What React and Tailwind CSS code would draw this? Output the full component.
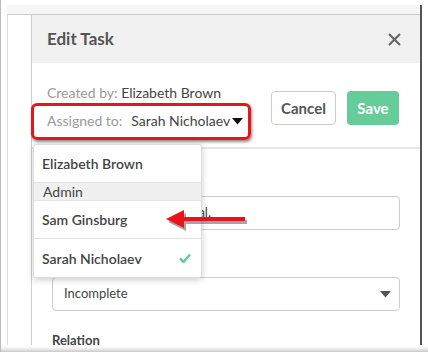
import React from "react";

const font = { fontFamily: "Lato, 'Open Sans', sans-serif" };

const Caret = ({ className = "" }) => (
  <svg width="11" height="7" viewBox="0 0 11 7" className={className}>
    <path d="M0 0 L11 0 L5.5 6.5 Z" fill="currentColor" />
  </svg>
);

const App = () => {
  return (
    <div
      className="relative w-[428px] h-[352px] overflow-hidden bg-white border-l border-[#bbb] shadow-[inset_0_-6px_4px_-4px_rgba(0,0,0,0.25)]"
      style={font}
    >
      {/* page frame */}
      <div className="ml-[6px] mt-[5px] w-[415px] h-[340px] flex flex-col overflow-hidden border-r-2 border-[#555]">
        <div className="h-[10px] shrink-0 bg-[#f6f6f6] border-b border-[#ccc]" />
        <div className="flex flex-1 min-h-0">
          <div className="w-[24px] shrink-0 border-l border-[#ddd]" />

          {/* Edit Task panel */}
          <div className="flex-1 flex flex-col border-l border-[#ccc] bg-white">
            <div className="h-[48px] shrink-0 bg-[#f1f1f1] flex items-center justify-between pl-[15px] pr-[19px]">
              <h1 className="text-[17px] font-bold text-[#555]">Edit Task</h1>
              <svg width="13" height="13" viewBox="0 0 13 13">
                <path d="M1 1 L12 12 M12 1 L1 12" stroke="#666" strokeWidth="2.2" />
              </svg>
            </div>

            <div className="shrink-0 flex items-start justify-between pl-[15px] pr-[21px] pt-[19px] h-[86px] border-b-2 border-[#e6e6e6]">
              <div className="text-[14px] leading-[16px]">
                <div className="pt-[3px]">
                  <span className="text-[#999]">Created by: </span>
                  <span className="text-[#444]">Elizabeth Brown</span>
                </div>
                <div className="mt-[12px] flex items-center">
                  <span className="text-[#999]">Assigned to:</span>
                  <span className="ml-[9px] text-[#444]">Sarah Nicholaev</span>
                  <Caret className="ml-[2px] text-[#111]" />
                </div>
              </div>
              <div className="flex gap-[11px] mt-[9px]">
                <button className="h-[34px] w-[65px] rounded-[4px] border border-[#ccc] bg-white text-[15px] font-bold text-[#555]">
                  Cancel
                </button>
                <button className="h-[34px] w-[52px] rounded-[4px] bg-[#66cc9a] text-[15px] font-bold text-white">
                  Save
                </button>
              </div>
            </div>

            <div className="px-[20px] pt-[21px]">
              <div className="h-[26px]" />
              <div className="h-[34px] rounded-[4px] border border-[#ccc] flex items-center pl-[12px] text-[13px] text-[#444]">
                Review the final proposal.
              </div>
              <div className="h-[47px]" />
              <div className="h-[34px] rounded-[4px] border border-[#ccc] flex items-center justify-between pl-[11px] pr-[8px] text-[13px] text-[#444]">
                <span>Incomplete</span>
                <Caret className="text-[#555]" />
              </div>
              <div className="mt-[20px] text-[13px] font-bold text-[#444]">Relation</div>
            </div>
          </div>
        </div>
      </div>

      {/* red highlight around Assigned to */}
      <div className="absolute left-[30px] top-[103px] w-[220px] h-[37px] rounded-[6px] border-[3px] border-[#e8131b] shadow-[1px_2px_3px_rgba(0,0,0,0.45)]" />

      {/* assignee dropdown */}
      <div className="absolute left-[32px] top-[144px] w-[169px] bg-white rounded-[3px] border border-[#ddd] shadow-[0_2px_6px_rgba(0,0,0,0.2)] text-[14px] font-semibold text-[#444]">
        <div className="h-[38px] flex items-center pl-[8px] border-b border-[#e3e3e3]">Elizabeth Brown</div>
        <div className="h-[18px] flex items-center pl-[9px] bg-[#f0f0f0] border-b border-[#e3e3e3] font-normal">Admin</div>
        <div className="h-[38px] flex items-center pl-[8px] border-b border-[#e3e3e3]">Sam Ginsburg</div>
        <div className="h-[38px] flex items-center justify-between pl-[8px] pr-[10px]">
          <span>Sarah Nicholaev</span>
          <svg width="12" height="10" viewBox="0 0 12 10">
            <path d="M1 5.5 L4.5 9 L11 1.5" stroke="#66cc9a" strokeWidth="2.5" fill="none" />
          </svg>
        </div>
      </div>

      {/* red arrow */}
      <svg
        className="absolute left-[160px] top-[207px]"
        width="92"
        height="26"
        viewBox="0 0 92 26"
      >
        <g opacity="0.35" transform="translate(2 3)">
          <path d="M5 12 L23 3 L23 10 L84 10 L84 14 L23 14 L23 21 Z" fill="#000" />
        </g>
        <path d="M5 12 L23 3 L23 10 L84 10 L84 14 L23 14 L23 21 Z" fill="#e8131b" />
      </svg>
    </div>
  );
};

export default App;
